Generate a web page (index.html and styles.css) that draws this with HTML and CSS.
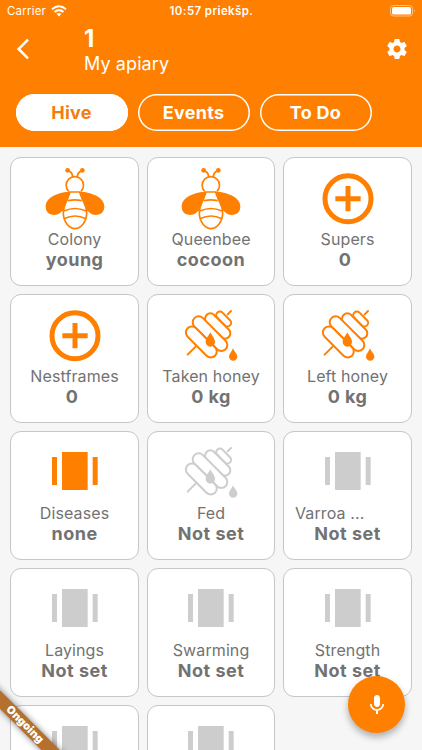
FILE: index.html
```html
<!DOCTYPE html>
<html lang="en">
<head>
    <meta charset="UTF-8">
    <meta name="viewport" content="width=device-width, initial-scale=1.0">
    <title>My apiary</title>
    <link rel="stylesheet" href="styles.css">
</head>
<body>
    <!-- Shared icons -->
    <svg class="icon-defs" width="0" height="0">
        <symbol id="bee" viewBox="0 0 186 198">
            <g fill="none" stroke="currentColor" stroke-width="5">
                <path d="M71 14Q86 18 86 34M115 14Q100 18 100 34"/>
                <path d="M74 76A26 26 0 1 1 111 76"/>
                <path d="M78 78H107C111 96 128 112 128 142C128 168 110 188 93 188C76 188 58 168 58 142C58 112 74 96 78 78Z"/>
                <path d="M72 104Q93 99 113 104M60 135Q93 120 126 135M60 158Q93 142 126 158"/>
            </g>
            <g fill="currentColor">
                <circle cx="71" cy="13" r="7"/>
                <circle cx="115" cy="13" r="7"/>
                <path d="M78 77C48 78 5 91 5 121C5 138 15 147 31 147C45 147 50 139 58 133C62 117 73 107 78 77Z"/>
                <path d="M107 77C138 78 181 91 181 121C181 138 171 147 155 147C141 147 136 139 128 133C124 117 112 107 107 77Z"/>
            </g>
        </symbol>
        <symbol id="plus" viewBox="0 0 186 198">
            <circle cx="93" cy="98" r="69" fill="none" stroke="currentColor" stroke-width="15"/>
            <path d="M55 98H131M93 60V136" stroke="currentColor" stroke-width="15"/>
        </symbol>
        <symbol id="honey" viewBox="0 0 186 198">
            <g fill="#fff" stroke="currentColor" stroke-width="6" stroke-linecap="round">
                <path d="M23 155L50 128M143 34L153 24"/>
                <rect x="-27" y="-11" width="54" height="22" rx="11" transform="translate(131 48) rotate(45)"/>
                <rect x="-47" y="-16" width="94" height="32" rx="16" transform="translate(113 69) rotate(45)"/>
                <rect x="-66" y="-18" width="132" height="36" rx="18" transform="translate(90 92) rotate(45)"/>
                <rect x="-58" y="-18" width="116" height="36" rx="18" transform="translate(64 117) rotate(45)"/>
            </g>
            <path fill="currentColor" d="M91 88C86 99 77 106 77 117A14 14 0 0 0 105 117C105 106 96 99 91 88ZM159 136C156 145 147 152 147 161A12.500 12.500 0 0 0 172 161C172 152 162 145 159 136Z"/>
        </symbol>
        <symbol id="frames" viewBox="0 0 186 198">
            <path fill="currentColor" d="M24 51h15v84H24zM54 36h77v114H54zM146 51h15v84h-15z"/>
        </symbol>
    </svg>

    <div class="screen">
        <header class="header">
            <div class="status-bar">
                <div class="carrier">
                    <span>Carrier</span>
                    <svg width="16" height="12" viewBox="0 0 16 12">
                        <path d="M1 4.300Q8-1.700 15 4.300M3.500 7Q8 3.200 12.500 7" fill="none" stroke="#fff" stroke-width="2"/>
                        <path d="M5.500 8.800Q8 7 10.500 8.800L8 11.500z" fill="#fff"/>
                    </svg>
                </div>
                <span class="time">10:57 priekšp.</span>
                <svg class="battery" width="26" height="12" viewBox="0 0 26 12">
                    <rect x=".5" y=".5" width="22" height="10.500" rx="3" fill="none" stroke="#fff" stroke-opacity=".5"/>
                    <rect x="2" y="2" width="19" height="7.500" rx="1.600" fill="#fff"/>
                    <path d="M24 4v4q1.500-2 0-4" fill="#fff" fill-opacity=".5"/>
                </svg>
            </div>

            <div class="title-bar">
                <svg class="back" width="14" height="22" viewBox="0 0 14 22">
                    <path d="M12 1.700L2.600 11L12 20.300" fill="none" stroke="#fff" stroke-width="2.500"/>
                </svg>
                <div class="title">
                    <h1>1</h1>
                    <p>My apiary</p>
                </div>
                <svg class="settings" width="24" height="24" viewBox="0 0 24 24">
                    <path fill="#fff" d="M19.430 12.980c.04-.32.07-.64.07-.98s-.03-.66-.07-.98l2.110-1.650c.19-.15.24-.42.12-.64l-2-3.460c-.12-.22-.39-.3-.61-.22l-2.490 1c-.52-.4-1.080-.73-1.690-.98l-.38-2.650C14.460 2.180 14.250 2 14 2h-4c-.25 0-.46.18-.49.42l-.38 2.650c-.61.25-1.170.59-1.690.98l-2.490-1c-.23-.09-.49 0-.61.22l-2 3.460c-.13.22-.07.49.12.64l2.110 1.650c-.04.32-.07.65-.07.98s.03.66.07.98l-2.110 1.650c-.19.15-.24.42-.12.64l2 3.460c.12.22.39.3.61.22l2.490-1c.52.4 1.080.73 1.690.98l.38 2.650c.03.24.24.42.49.42h4c.25 0 .46-.18.49-.42l.38-2.650c.61-.25 1.170-.59 1.690-.98l2.490 1c.23.09.49 0 .61-.22l2-3.460c.12-.22.07-.49-.12-.64l-2.110-1.650zM12 15.500c-1.930 0-3.500-1.570-3.500-3.500s1.570-3.500 3.500-3.500 3.500 1.570 3.500 3.500-1.570 3.500-3.500 3.500z"/>
                </svg>
            </div>

            <nav class="tabs">
                <button class="tab active">Hive</button>
                <button class="tab">Events</button>
                <button class="tab">To Do</button>
            </nav>
        </header>

        <main class="grid">
            <div class="card">
                <svg class="icon"><use href="#bee"/></svg>
                <div class="label">Colony</div>
                <div class="value">young</div>
            </div>
            <div class="card">
                <svg class="icon"><use href="#bee"/></svg>
                <div class="label">Queenbee</div>
                <div class="value">cocoon</div>
            </div>
            <div class="card">
                <svg class="icon"><use href="#plus"/></svg>
                <div class="label">Supers</div>
                <div class="value count">0</div>
            </div>
            <div class="card">
                <svg class="icon"><use href="#plus"/></svg>
                <div class="label">Nestframes</div>
                <div class="value count">0</div>
            </div>
            <div class="card">
                <svg class="icon"><use href="#honey"/></svg>
                <div class="label">Taken honey</div>
                <div class="value">0 kg</div>
            </div>
            <div class="card">
                <svg class="icon"><use href="#honey"/></svg>
                <div class="label">Left honey</div>
                <div class="value">0 kg</div>
            </div>
            <div class="card">
                <svg class="icon"><use href="#frames"/></svg>
                <div class="label">Diseases</div>
                <div class="value">none</div>
            </div>
            <div class="card empty">
                <svg class="icon"><use href="#honey"/></svg>
                <div class="label">Fed</div>
                <div class="value">Not set</div>
            </div>
            <div class="card empty">
                <svg class="icon"><use href="#frames"/></svg>
                <div class="label cut">Varroa ...</div>
                <div class="value">Not set</div>
            </div>
            <div class="card empty">
                <svg class="icon"><use href="#frames"/></svg>
                <div class="label">Layings</div>
                <div class="value">Not set</div>
            </div>
            <div class="card empty">
                <svg class="icon"><use href="#frames"/></svg>
                <div class="label">Swarming</div>
                <div class="value">Not set</div>
            </div>
            <div class="card empty">
                <svg class="icon"><use href="#frames"/></svg>
                <div class="label">Strength</div>
                <div class="value">Not set</div>
            </div>
            <div class="card empty">
                <svg class="icon"><use href="#frames"/></svg>
            </div>
            <div class="card empty">
                <svg class="icon"><use href="#frames"/></svg>
            </div>
        </main>

        <div class="ribbon">Ongoing</div>

        <button class="mic">
            <svg width="24" height="24" viewBox="0 0 24 24">
                <path fill="#fff" d="M12 14c1.660 0 3-1.340 3-3V5c0-1.660-1.340-3-3-3S9 3.340 9 5v6c0 1.660 1.340 3 3 3zM17.300 11c0 3-2.540 5.100-5.300 5.100S6.700 14 6.700 11H5c0 3.410 2.720 6.230 6 6.720V21h2v-3.280c3.280-.48 6-3.300 6-6.720h-1.700z"/>
            </svg>
        </button>
    </div>
</body>
</html>
```

FILE: styles.css
```css
body {
    font-family: Inter, sans-serif;
    margin: 0;
    background-color: #f6f6f6;
    overflow: hidden;
}

.icon-defs {
    display: none;
}

.screen {
    position: relative;
    width: 422px;
    height: 750px;
    overflow: hidden;
}

.header {
    background-color: #ff8000;
    color: #fff;
    height: 147px;
}

.status-bar {
    display: grid;
    grid-template-columns: 1fr auto 1fr;
    align-items: center;
    height: 22px;
    padding: 0 6px 0 7px;
    font-size: 11.5px;
}

.carrier {
    display: flex;
    align-items: center;
    gap: 5px;
    letter-spacing: 0.2px;
}

.time {
    font-weight: 600;
    letter-spacing: 0.4px;
}

.battery {
    justify-self: end;
}

.title-bar {
    display: flex;
    align-items: center;
    height: 54px;
    padding: 0 13px 0 16px;
}

.title {
    flex: 1;
    margin-left: 54px;
    padding-top: 2px;
}

.title h1 {
    margin: 0;
    font-size: 24px;
    line-height: 27px;
}

.title p {
    margin: 0;
    font-size: 18px;
    line-height: 23px;
    letter-spacing: 0.1px;
}

.tabs {
    display: flex;
    gap: 10px;
    padding: 17.500px 15.500px 0;
}

.tab {
    width: 112px;
    height: 37.500px;
    padding: 0;
    border: none;
    border-radius: 19px;
    box-shadow: inset 0 0 0 1.500px #fff;
    background: none;
    color: #fff;
    font-family: inherit;
    font-size: 18px;
    font-weight: 700;
    letter-spacing: 0.3px;
}

.tab.active {
    background-color: #fff;
    color: #f47d10;
}

.grid {
    display: grid;
    grid-template-columns: repeat(3, 128.500px);
    grid-auto-rows: 128.900px;
    gap: 8px;
    padding: 10px 0 0 10.300px;
}

.card {
    display: flex;
    flex-direction: column;
    align-items: center;
    box-sizing: border-box;
    border: 1px solid #c6c6c6;
    border-radius: 11px;
    background-color: #fff;
    color: #727272;
    padding-top: 8px;
}

.icon {
    width: 62px;
    height: 66px;
    flex-shrink: 0;
    color: #ff8000;
}

.empty .icon {
    color: #cdcdcd;
}

.label {
    margin-top: -1px;
    font-size: 16px;
    line-height: 17px;
    letter-spacing: 0.1px;
    white-space: nowrap;
}

.label.cut {
    width: 105px;
}

.value {
    font-size: 18px;
    font-weight: 700;
    line-height: 24px;
    letter-spacing: 0.5px;
}

.value.count {
    padding-right: 5px;
}

.ribbon {
    position: absolute;
    left: -47px;
    top: 718px;
    width: 144px;
    height: 13px;
    background-color: #b4702c;
    box-shadow: 0 0 6px rgba(0, 0, 0, 0.5);
    color: #fff;
    font-size: 11px;
    font-weight: 900;
    line-height: 12px;
    letter-spacing: 0.1px;
    text-align: center;
    transform: rotate(45deg);
}

.mic {
    position: absolute;
    left: 348px;
    top: 676px;
    display: flex;
    align-items: center;
    justify-content: center;
    width: 57px;
    height: 57px;
    padding: 0;
    border: none;
    border-radius: 50%;
    background-color: #ff8000;
    box-shadow: 0 4px 7px rgba(0, 0, 0, 0.3);
}
```
